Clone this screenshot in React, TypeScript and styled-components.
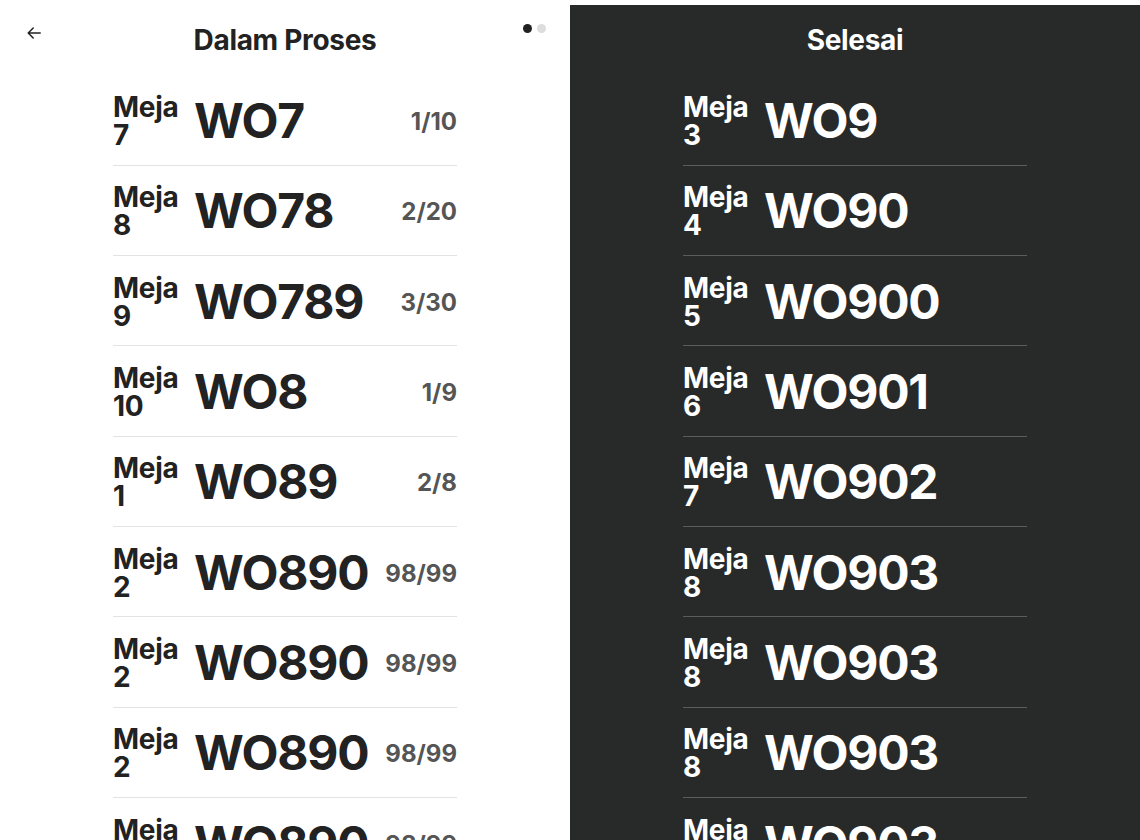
import React from "react";
import styled, { createGlobalStyle } from "styled-components";

const GlobalStyle = createGlobalStyle`
  html, body {
    margin: 0;
    padding: 0;
    background: #ffffff;
  }
  body {
    font-family: Inter, "Noto Sans", "Liberation Sans", sans-serif;
    -webkit-font-smoothing: antialiased;
  }
`;

const Page = styled.div`
  display: grid;
  grid-template-columns: 570px 570px;
  width: 1140px;
  height: 840px;
  overflow: hidden;
  align-items: start;
`;

const Panel = styled.section<{ $dark?: boolean }>`
  display: flex;
  flex-direction: column;
  align-items: center;
  margin-top: ${(p) => (p.$dark ? "5px" : "0")};
  height: ${(p) => (p.$dark ? "835px" : "840px")};
  background: ${(p) => (p.$dark ? "#282a29" : "#ffffff")};
  color: ${(p) => (p.$dark ? "#ffffff" : "#222222")};
  overflow: hidden;
`;

const Header = styled.header<{ $dark?: boolean }>`
  display: grid;
  grid-template-columns: 1fr auto 1fr;
  align-items: start;
  width: 100%;
  height: ${(p) => (p.$dark ? "70.5px" : "75.5px")};
  flex-shrink: 0;
`;

const Title = styled.h1<{ $dark?: boolean }>`
  grid-column: 2;
  margin: ${(p) => (p.$dark ? "18.5px" : "23.5px")} 0 0;
  font-size: 28px;
  line-height: 32px;
  font-weight: 700;
  letter-spacing: -0.3px;
`;

const BackButton = styled.button`
  grid-column: 1;
  justify-self: start;
  display: flex;
  align-items: center;
  justify-content: center;
  margin: 27px 0 0 26px;
  padding: 0;
  width: 16px;
  height: 12px;
  border: none;
  background: transparent;
  color: #222222;
  cursor: pointer;
`;

const Dots = styled.div`
  grid-column: 3;
  justify-self: end;
  display: flex;
  gap: 5px;
  margin: 24px 24px 0 0;
`;

const Dot = styled.span<{ $active?: boolean }>`
  width: 9px;
  height: 9px;
  border-radius: 50%;
  background: ${(p) => (p.$active ? "#222222" : "#dddddd")};
`;

const List = styled.ul`
  list-style: none;
  margin: 0;
  padding: 0;
  width: 344px;
`;

const Row = styled.li<{ $dark?: boolean }>`
  display: flex;
  align-items: center;
  gap: 17px;
  height: 90.3px;
  box-sizing: border-box;
  padding-top: 2px;
  border-bottom: 1px solid ${(p) => (p.$dark ? "#5b5c5b" : "#e3e3e3")};
`;

const Table = styled.div`
  width: 64px;
  flex-shrink: 0;
  font-size: 28px;
  line-height: 28px;
  font-weight: 700;
  letter-spacing: -0.3px;
  white-space: nowrap;
`;

const Code = styled.div`
  flex: 1;
  min-width: 0;
  font-size: 48px;
  line-height: 56px;
  font-weight: 700;
  letter-spacing: -1.2px;
  white-space: nowrap;
`;

const Count = styled.div`
  flex-shrink: 0;
  padding-top: 2px;
  font-size: 24px;
  line-height: 28px;
  font-weight: 700;
  color: #555555;
  white-space: nowrap;
`;

type Item = { table: string; code: string; count?: string };

const inProgress: Item[] = [
  { table: "7", code: "WO7", count: "1/10" },
  { table: "8", code: "WO78", count: "2/20" },
  { table: "9", code: "WO789", count: "3/30" },
  { table: "10", code: "WO8", count: "1/9" },
  { table: "1", code: "WO89", count: "2/8" },
  { table: "2", code: "WO890", count: "98/99" },
  { table: "2", code: "WO890", count: "98/99" },
  { table: "2", code: "WO890", count: "98/99" },
  { table: "2", code: "WO890", count: "98/99" },
];

const done: Item[] = [
  { table: "3", code: "WO9" },
  { table: "4", code: "WO90" },
  { table: "5", code: "WO900" },
  { table: "6", code: "WO901" },
  { table: "7", code: "WO902" },
  { table: "8", code: "WO903" },
  { table: "8", code: "WO903" },
  { table: "8", code: "WO903" },
  { table: "8", code: "WO903" },
];

const ArrowIcon = () => (
  <svg width="14" height="12" viewBox="0 0 14 12" fill="none">
    <path
      d="M13.2 6H1.2M6.2 1L1.2 6L6.2 11"
      stroke="currentColor"
      strokeWidth="1.5"
      strokeLinecap="round"
      strokeLinejoin="round"
    />
  </svg>
);

const OrderList = ({ items, dark }: { items: Item[]; dark?: boolean }) => (
  <List>
    {items.map((it, i) => (
      <Row key={i} $dark={dark}>
        <Table>
          Meja
          <br />
          {it.table}
        </Table>
        <Code>{it.code}</Code>
        {it.count && <Count>{it.count}</Count>}
      </Row>
    ))}
  </List>
);

export default function App() {
  return (
    <>
      <GlobalStyle />
      <Page>
        <Panel>
          <Header>
            <BackButton aria-label="Kembali">
              <ArrowIcon />
            </BackButton>
            <Title>Dalam Proses</Title>
            <Dots>
              <Dot $active />
              <Dot />
            </Dots>
          </Header>
          <OrderList items={inProgress} />
        </Panel>
        <Panel $dark>
          <Header $dark>
            <Title $dark>Selesai</Title>
          </Header>
          <OrderList items={done} dark />
        </Panel>
      </Page>
    </>
  );
}
